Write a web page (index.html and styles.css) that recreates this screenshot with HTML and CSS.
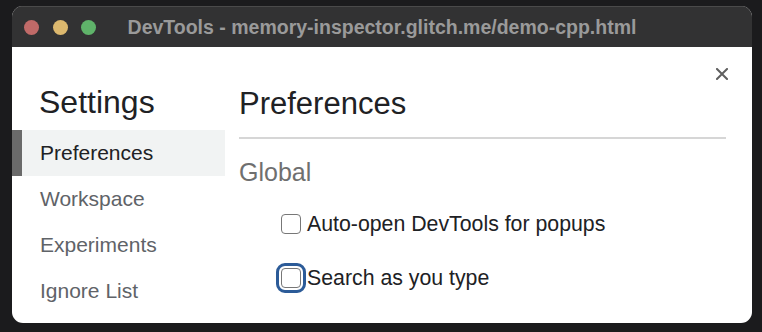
FILE: index.html
```html
<!DOCTYPE html>
<html>
<head>
<meta charset="utf-8">
<link rel="stylesheet" href="styles.css">
</head>
<body>
<div class="window">
  <div class="titlebar">
    <div class="lights">
      <span class="light red"></span>
      <span class="light yellow"></span>
      <span class="light green"></span>
    </div>
    <div class="title">DevTools - memory-inspector.glitch.me/demo-cpp.html</div>
    <div></div>
  </div>
  <div class="content">
    <nav class="sidebar">
      <h1 class="side-title">Settings</h1>
      <div class="nav-item selected">Preferences</div>
      <div class="nav-item">Workspace</div>
      <div class="nav-item">Experiments</div>
      <div class="nav-item">Ignore List</div>
    </nav>
    <main class="main">
      <h2 class="main-title">Preferences</h2>
      <h3 class="section">Global</h3>
      <div class="options">
        <label class="row"><span class="box"></span><span class="label">Auto-open DevTools for popups</span></label>
        <label class="row"><span class="box focused"></span><span class="label">Search as you type</span></label>
      </div>
    </main>
    <button class="close" aria-label="Close">
      <svg width="12" height="12" viewBox="0 0 12 12"><path d="M1 1L11 11M11 1L1 11" stroke="#5f5f5f" stroke-width="2" stroke-linecap="square"/></svg>
    </button>
  </div>
</div>
</body>
</html>
```

FILE: styles.css
```css
html, body {
  margin: 0;
  padding: 0;
}
body {
  background: #1b1b1d;
  width: 762px;
  height: 332px;
  overflow: hidden;
  font-family: "Liberation Sans", Arial, sans-serif;
}
.window {
  margin: 6px 0 0 12px;
  width: 740px;
  height: 317px;
  border-radius: 11px;
  overflow: hidden;
  background: #fff;
  display: flex;
  flex-direction: column;
}
.titlebar {
  height: 41px;
  background: #323233;
  border-top: 1px solid #4a4a4a;
  box-sizing: border-box;
  display: grid;
  grid-template-columns: 1fr auto 1fr;
  align-items: center;
}
.lights {
  display: flex;
  gap: 13.5px;
  padding-left: 12px;
}
.light {
  width: 15px;
  height: 15px;
  border-radius: 50%;
  display: block;
}
.red { background: #c06a68; }
.yellow { background: #dcb86e; }
.green { background: #5fb36a; }
.title {
  color: #9a9a9a;
  font-weight: bold;
  font-size: 19.5px;
  white-space: nowrap;
}
.content {
  flex: 1;
  display: flex;
  position: relative;
}
.sidebar {
  width: 213px;
  flex: none;
}
.side-title {
  margin: 37px 0 10px 27px;
  font-size: 32px;
  line-height: 36px;
  font-weight: normal;
  color: #202124;
}
.nav-item {
  height: 46px;
  line-height: 46px;
  font-size: 21px;
  color: #5f6368;
  padding-left: 18px;
  border-left: 10px solid transparent;
}
.nav-item.selected {
  background: #f1f3f3;
  border-left-color: #6a6a6a;
  color: #202124;
}
.main {
  flex: 1;
  padding: 39px 26px 0 14px;
}
.main-title {
  margin: 0;
  font-size: 31px;
  line-height: 36px;
  font-weight: normal;
  color: #202124;
  padding-bottom: 15px;
  border-bottom: 2px solid #d6d6d6;
}
.section {
  margin: 18px 0 0 0;
  font-size: 25px;
  line-height: 30px;
  font-weight: normal;
  color: #6f6f6f;
}
.options {
  padding: 22px 0 0 42px;
  display: flex;
  flex-direction: column;
  gap: 24px;
}
.row {
  display: flex;
  align-items: center;
  height: 30px;
  gap: 6px;
  font-size: 21.3px;
  color: #202124;
}
.box {
  width: 20px;
  height: 20px;
  box-sizing: border-box;
  border: 1.5px solid #777;
  border-radius: 4px;
  flex: none;
  margin-top: -1px;
}
.box.focused {
  outline: 3px solid #2c5b98;
  outline-offset: 2px;
}
.close {
  position: absolute;
  right: 24px;
  top: 21px;
  width: 12px;
  height: 12px;
  padding: 0;
  border: 0;
  background: none;
  display: flex;
}
```
